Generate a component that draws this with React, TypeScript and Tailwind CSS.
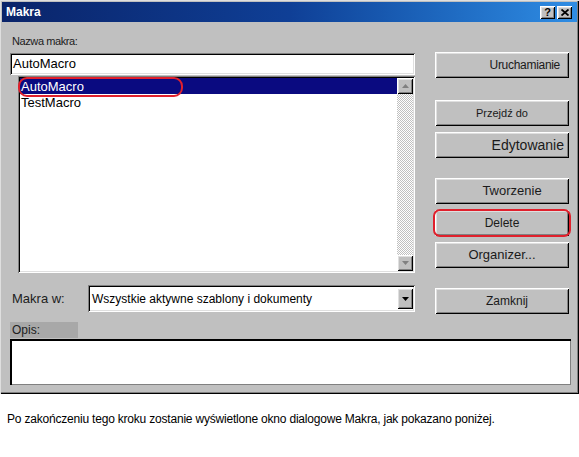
import React from 'react';

const raised =
  'shadow-[inset_1px_1px_0_#ffffff,inset_-1px_-1px_0_#000000,inset_2px_2px_0_#dfdfdf,inset_-2px_-2px_0_#808080]';
const sunken =
  'shadow-[inset_1px_1px_0_#808080,inset_-1px_-1px_0_#ffffff,inset_2px_2px_0_#000000,inset_-2px_-2px_0_#dfdfdf]';

type BtnProps = { label: string; className?: string; textClass?: string; circled?: boolean };

const DlgButton: React.FC<BtnProps> = ({ label, className = '', textClass = 'justify-center', circled }) => (
  <div className={`relative h-[26px] w-[134px] bg-[#c0c0c0] flex items-center text-[#1a1a1a] ${raised} ${textClass} ${className}`}>
    {label}
    {circled && <div className="absolute -inset-x-[2px] -inset-y-[1px] rounded-[7px] border-2 border-[#e0202c]" />}
  </div>
);

const Arrow: React.FC<{ up?: boolean; color: string }> = ({ up, color }) => (
  <svg width="7" height="4" viewBox="0 0 7 4">
    <polygon points={up ? '3.5,0 7,4 0,4' : '0,0 7,0 3.5,4'} fill={color} />
  </svg>
);

export default function App() {
  const macros = ['AutoMacro', 'TestMacro'];

  return (
    <div className="w-[579px] h-[457px] bg-white font-['Liberation_Sans',Arial,sans-serif] text-black">
      {/* Dialog window */}
      <div className="w-[579px] h-[394px] bg-[#c0c0c0] p-[2px] shadow-[inset_1px_1px_0_#dfdfdf,inset_-1px_-1px_0_#000000,inset_-2px_-2px_0_#808080]">
        {/* Title bar */}
        <div className="h-[20px] flex items-center bg-gradient-to-r from-[#0a246a] via-[#0f3f96] to-[#2f8de4] pl-[4px] pr-[5px]">
          <span className="text-white font-bold text-[12px] leading-none">Makra</span>
          <div className="ml-auto flex gap-[2px]">
            <div className={`w-[15px] h-[13px] bg-[#c0c0c0] flex items-center justify-center text-[11px] font-bold leading-none ${raised}`}>?</div>
            <div className={`w-[15px] h-[13px] bg-[#c0c0c0] flex items-center justify-center ${raised}`}>
              <svg width="8" height="7" viewBox="0 0 8 7">
                <path d="M0.5 0.5 L7.5 6.5 M7.5 0.5 L0.5 6.5" stroke="#000" strokeWidth="1.8" />
              </svg>
            </div>
          </div>
        </div>

        {/* Body */}
        <div className="pl-[8px]">
          <div className="flex">
            {/* Left column */}
            <div className="w-[405px] flex flex-col">
              <div className="mt-[12px] pl-[2px] text-[11px] leading-[14px] tracking-[-0.4px] text-[#202020]">Nazwa makra:</div>
              <div className={`mt-[5px] h-[22px] bg-white flex items-center pl-[3px] text-[13px] ${sunken}`}>AutoMacro</div>
              <div className={`ml-[8px] mt-[1px] w-[397px] h-[197px] bg-white flex p-[2px] ${sunken}`}>
                <div className="flex-1 flex flex-col">
                  {macros.map((m, i) => (
                    <div
                      key={m}
                      className={`relative h-[16px] flex items-center pl-[1px] text-[13px] leading-none ${i === 0 ? 'bg-[#0a0a80] text-white' : ''}`}
                    >
                      {m}
                      {i === 0 && <div className="absolute left-[-2px] top-[-1px] w-[165px] h-[20px] rounded-[9px] border-2 border-[#e0202c]" />}
                    </div>
                  ))}
                </div>
                <div className="w-[16px] flex flex-col bg-[image:repeating-conic-gradient(#c0c0c0_0%_25%,#ffffff_0%_50%)] bg-[length:2px_2px]">
                  <div className={`h-[16px] bg-[#c0c0c0] flex items-center justify-center ${raised}`}>
                    <Arrow up color="#808080" />
                  </div>
                  <div className="flex-1" />
                  <div className={`h-[16px] bg-[#c0c0c0] flex items-center justify-center ${raised}`}>
                    <Arrow color="#808080" />
                  </div>
                </div>
              </div>
              <div className="mt-[12px] flex items-center h-[27px]">
                <span className="w-[78px] pl-[2px] text-[13px] text-[#202020]">Makra w:</span>
                <div className={`w-[327px] h-[27px] bg-white flex items-center p-[2px] ${sunken}`}>
                  <span className="flex-1 pl-[2px] text-[12px]">Wszystkie aktywne szablony i dokumenty</span>
                  <div className={`w-[16px] h-[21px] bg-[#c0c0c0] flex items-center justify-center ${raised}`}>
                    <Arrow color="#000000" />
                  </div>
                </div>
              </div>
            </div>

            {/* Right column */}
            <div className="ml-[20px] flex flex-col">
              <DlgButton label="Uruchamianie" className="mt-[30px] text-[12px] tracking-[-0.3px]" textClass="justify-end pr-[9px]" />
              <DlgButton label="Przejdź do" className="mt-[22px] text-[11px]" />
              <DlgButton label="Edytowanie" className="mt-[6px] text-[14px]" textClass="justify-end pr-[5px]" />
              <DlgButton label="Tworzenie" className="mt-[20px] text-[13px]" textClass="justify-center pl-[20px]" />
              <DlgButton label="Delete" className="mt-[6px] text-[12px]" circled />
              <DlgButton label="Organizer..." className="mt-[6px] text-[13px]" />
              <DlgButton label="Zamknij" className="mt-[20px] text-[12px]" textClass="justify-center pl-[10px]" />
            </div>
          </div>

          {/* Description */}
          <div className="mt-[8px] w-[68px] h-[16px] bg-[#a8a8a8] flex items-center pl-[2px] text-[12px] text-[#202020]">Opis:</div>
          <div className="mt-[1px] w-[561px] h-[46px] bg-white shadow-[inset_2px_2px_0_#000000,inset_-1px_-1px_0_#808080,inset_-2px_-2px_0_#ffffff]" />
        </div>
      </div>

      <p className="mt-[18px] pl-[7px] text-[12px] leading-[14px] tracking-[-0.2px]">
        Po zakończeniu tego kroku zostanie wyświetlone okno dialogowe Makra, jak pokazano poniżej.
      </p>
    </div>
  );
}
